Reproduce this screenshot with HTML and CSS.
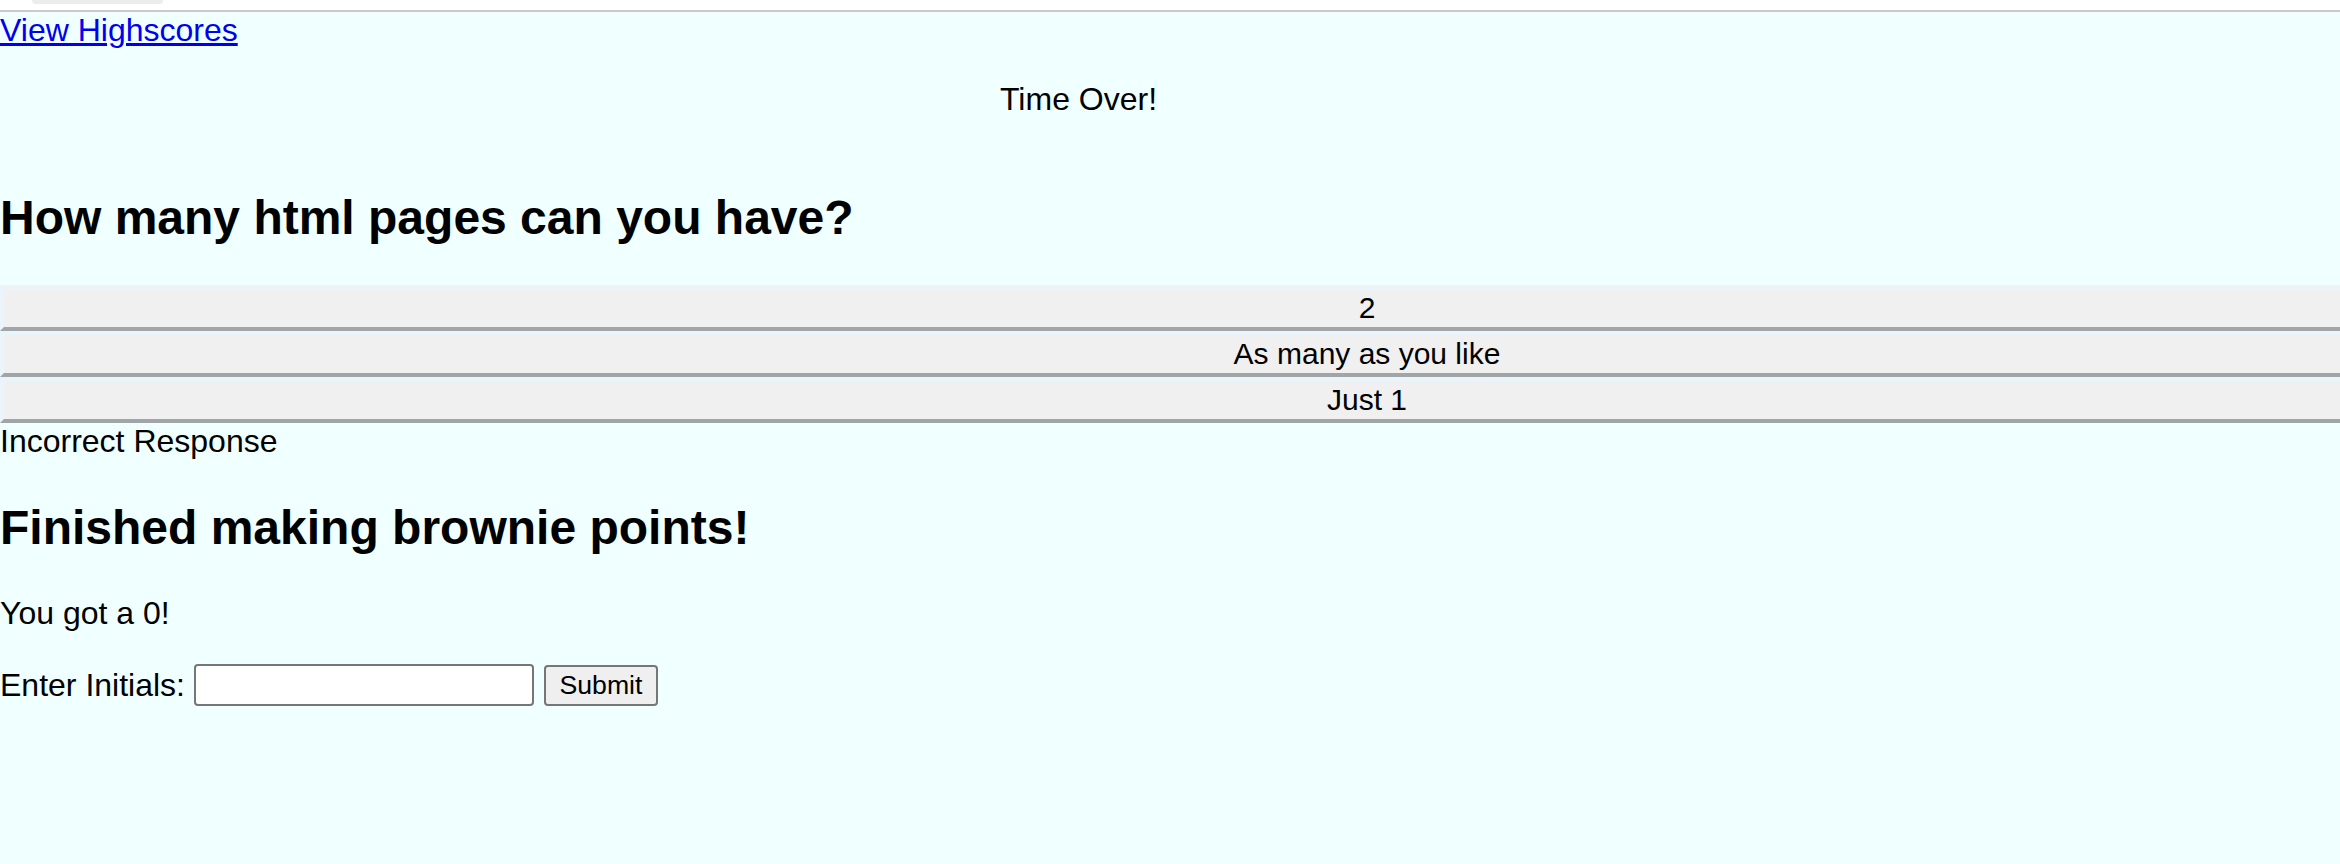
FILE: index.html
```html
<!DOCTYPE html>
<html lang="en">
<head>
<meta charset="utf-8">
<title>Quiz</title>
<link rel="stylesheet" href="styles.css">
</head>
<body>
<div class="topbar"><div class="tab"></div></div>
<header class="header">
  <a class="highscores" href="#">View Highscores</a>
  <p class="timer">Time Over!</p>
</header>
<main class="quiz">
  <h2 class="question">How many html pages can you have?</h2>
  <div class="answers">
    <button class="answer">2</button>
    <button class="answer">As many as you like</button>
    <button class="answer">Just 1</button>
  </div>
  <div class="feedback">Incorrect Response</div>
  <h2 class="done">Finished making brownie points!</h2>
  <p class="score">You got a 0!</p>
  <form class="initials-form">
    <label class="initials-label" for="initials">Enter Initials:</label>
    <input class="initials-input" id="initials" type="text">
    <button class="submit" type="button">Submit</button>
  </form>
</main>
</body>
</html>
```
FILE: styles.css
```css
html {
  overflow: hidden;
}
body {
  margin: 0;
  background: #f0ffff;
  font-family: "Liberation Sans", Arial, sans-serif;
  font-size: 32px;
  color: #000;
  overflow: hidden;
  min-height: 864px;
}
.topbar {
  height: 10px;
  background: #fff;
  border-bottom: 2px solid #cacaca;
  display: flex;
  align-items: flex-start;
}
.tab {
  margin-left: 32px;
  width: 131px;
  height: 4px;
  background: #ececec;
  border-radius: 0 0 14px 14px;
}
.header {
  display: block;
}
.highscores {
  color: #0000ee;
  text-decoration: underline;
}
.timer {
  margin: 32px 0 0 1000px;
}
.quiz {
  padding-top: 32px;
}
.question,
.done {
  font-size: 48px;
  font-weight: bold;
  margin: 40px 0;
}
.answers {
  display: flex;
  flex-direction: column;
  width: 100%;
  overflow: hidden;
}
.answer {
  display: block;
  flex: none;
  width: 2734px;
  margin: 0;
  padding: 2px 12px;
  font-family: "Liberation Sans", Arial, sans-serif;
  font-size: 30px;
  line-height: 34px;
  color: #000;
  background: #f0f0f0;
  border-style: solid;
  border-width: 4px;
  border-color: #eaf4fa #a0a5a8 #a0a5a8 #eaf4fa;
  text-align: center;
}
.feedback {
  line-height: 37px;
}
.score {
  margin: 40px 0 32px;
}
.initials-form {
  display: flex;
  align-items: center;
  margin: 0;
}
.initials-input {
  box-sizing: border-box;
  width: 340px;
  height: 42px;
  margin: 0 0 0 9px;
  background: #fff;
  border: 2px solid #767676;
  border-radius: 4px;
  font-size: 26.67px;
  padding: 2px 4px;
}
.submit {
  box-sizing: border-box;
  width: 114px;
  height: 41px;
  margin-left: 10px;
  padding: 0;
  font-family: "Liberation Sans", Arial, sans-serif;
  font-size: 26.67px;
  color: #000;
  background: #efefef;
  border: 2px solid #767676;
  border-radius: 4px;
}
```
